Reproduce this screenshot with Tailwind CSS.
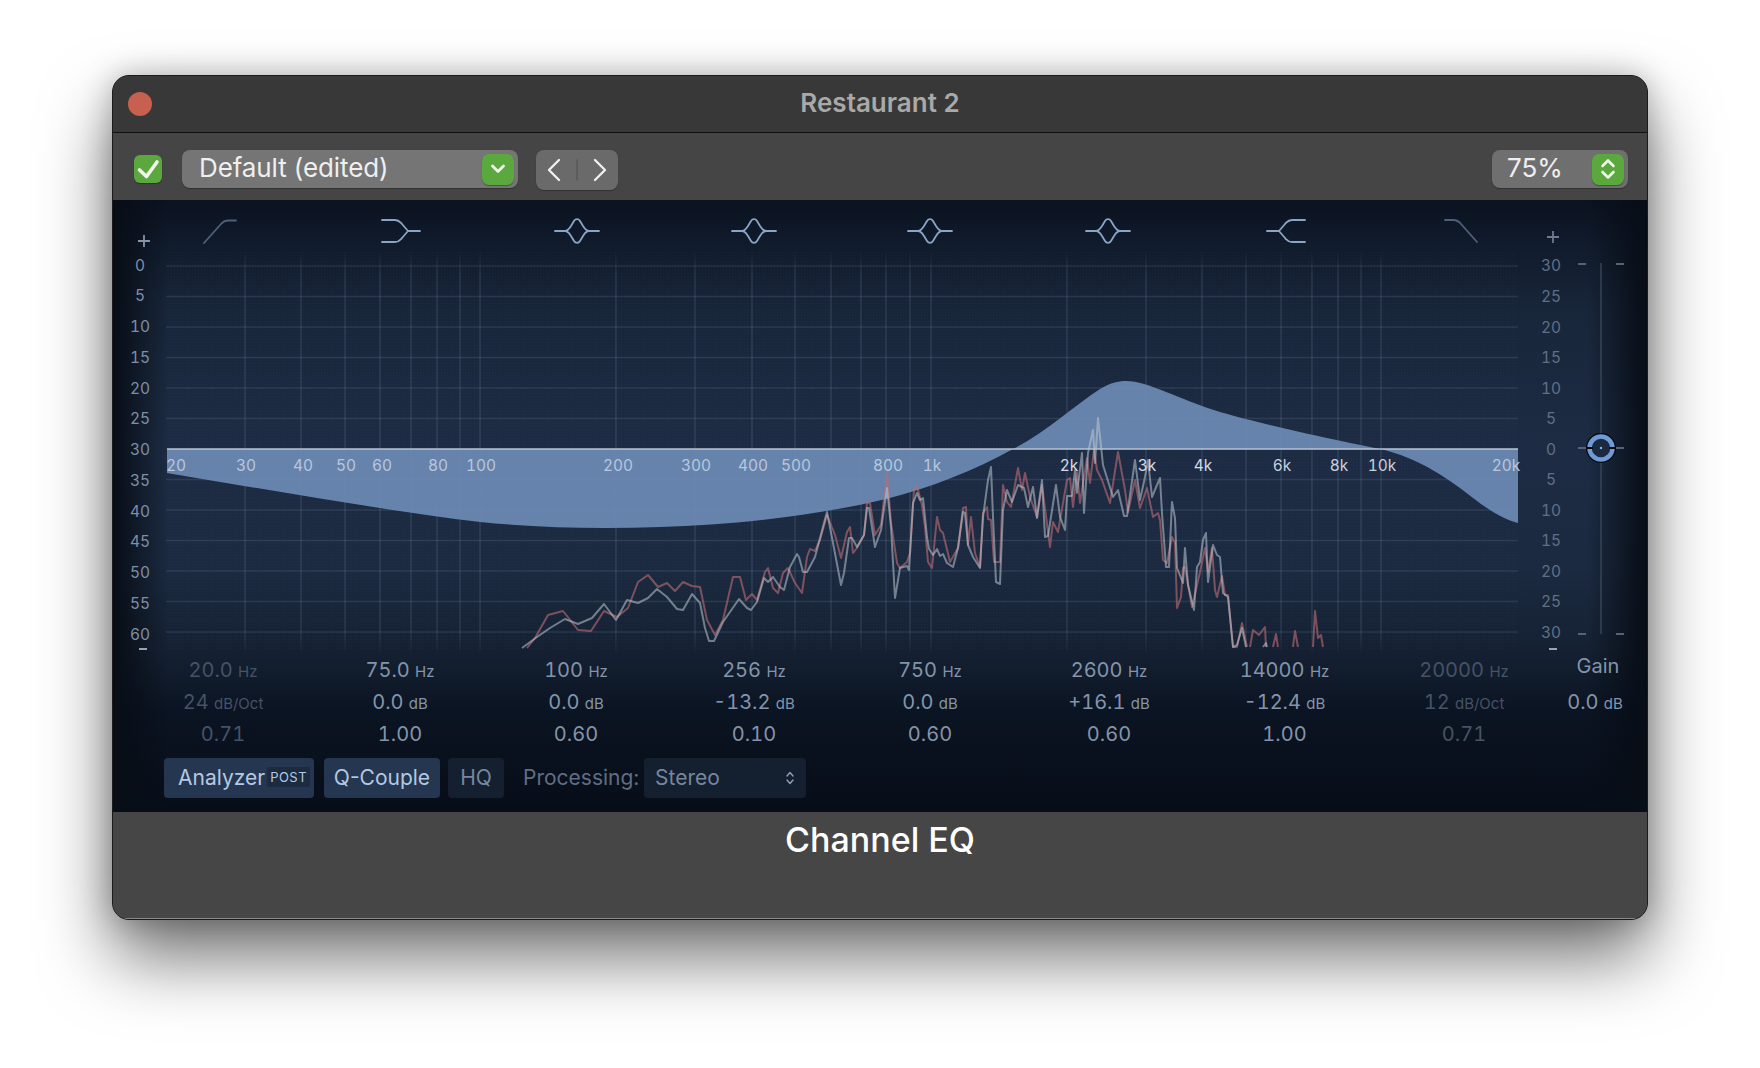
<!DOCTYPE html>
<html lang="en">

<head>
    <meta charset="UTF-8">
    <meta name="viewport" content="width=device-width, initial-scale=1.0">
    <title>Channel EQ</title>
    <script src="https://cdn.jsdelivr.net/npm/@tailwindcss/browser@4"></script>
</head>

<body class="bg-white antialiased font-['Inter',sans-serif]">
    <div class="w-[1760px] h-[1068px] overflow-hidden pt-[75px] pl-[112px]">
        <!-- plugin window -->
        <div class="w-[1536px] h-[845px] rounded-[17px] border border-[#1b1b1b] overflow-hidden flex flex-col bg-[#464646] shadow-[0_38px_70px_rgba(0,0,0,0.55),0_0_30px_rgba(0,0,0,0.25)]">

            <!-- title bar -->
            <div class="h-[57px] shrink-0 flex items-center pl-[15px] bg-[#383838] border-b border-[#111111] relative">
                <div class="w-[24px] h-[24px] rounded-full bg-[#c8604f]"></div>
                <div class="absolute inset-x-0 top-[12px] text-center text-[26px] leading-[30px] font-semibold text-[#a9a9a9]">Restaurant 2</div>
            </div>

            <!-- toolbar -->
            <div class="h-[67px] shrink-0 flex items-start pt-[17px] bg-[#454545]">
                <div class="ml-[21px] mt-[5px] w-[28px] h-[28px] rounded-[6px] bg-[#5aa83e] shadow-[0_1px_1px_rgba(0,0,0,0.3)]">
                    <svg width="28" height="28" viewBox="0 0 28 28" fill="none" stroke="#f2f6ee" stroke-width="3.6" stroke-linecap="round" stroke-linejoin="round"><path d="M5.500 15 L12.500 21.500 L23 7"/></svg>
                </div>
                <div class="ml-[20px] w-[336px] h-[38px] rounded-[8px] bg-[#757575] flex items-center justify-between pl-[17px] pr-[4px] shadow-[0_1px_1px_rgba(0,0,0,0.3)]">
                    <span class="text-[26px] leading-[32px] -mt-[3px] tracking-[-0.1px] text-[#efefef]">Default (edited)</span>
                    <div class="w-[32px] h-[31px] rounded-[7px] bg-[#5aa83e] flex items-center justify-center shadow-[0_1px_1px_rgba(0,0,0,0.3)]">
                        <svg width="16" height="12" viewBox="0 0 16 12" fill="none" stroke="#f0f5ec" stroke-width="2.8" stroke-linecap="round" stroke-linejoin="round"><path d="M2.500 3 L8 8.500 L13.500 3"/></svg>
                    </div>
                </div>
                <div class="ml-[18px] w-[82px] h-[40px] rounded-[8px] bg-[#6a6a6a] flex items-center justify-center shadow-[0_1px_1px_rgba(0,0,0,0.3)]">
                    <svg width="82" height="40" viewBox="0 0 82 40" fill="none" stroke="#eeeeee" stroke-width="2.4" stroke-linecap="round" stroke-linejoin="round">
                        <path d="M23 10 L13 20 L23 30"/>
                        <path d="M59 10 L69 20 L59 30"/>
                        <path d="M41 10 V30" stroke="#5a5a5a" stroke-width="1.6"/>
                    </svg>
                </div>
                <div class="ml-auto mr-[19px] w-[136px] h-[38px] rounded-[8px] bg-[#6f6f6f] flex items-center justify-between pl-[15px] pr-[4px] shadow-[0_1px_1px_rgba(0,0,0,0.3)]">
                    <span class="text-[26px] leading-[32px] -mt-[3px] text-[#efefef]">75%</span>
                    <div class="w-[32px] h-[31px] rounded-[7px] bg-[#5aa83e] flex items-center justify-center shadow-[0_1px_1px_rgba(0,0,0,0.3)]">
                        <svg width="18" height="24" viewBox="0 0 18 24" fill="none" stroke="#f0f5ec" stroke-width="2.6" stroke-linecap="round" stroke-linejoin="round"><path d="M3.500 9 L9 3.500 L14.500 9"/><path d="M3.500 15 L9 20.500 L14.500 15"/></svg>
                    </div>
                </div>
            </div>

            <!-- eq panel -->
            <div class="h-[612px] shrink-0 bg-[linear-gradient(90deg,#080d16,transparent_55px,transparent_calc(100%_-_60px),#080d16),linear-gradient(180deg,#0b1220_0px,#111c2d_50px,#18263a_110px,#1d2c44_250px,#1b2a40_370px,#152133_450px,#0b1422_510px,#070d18_612px)]">
                <svg width="1534" height="454" viewBox="113 200 1534 454" class="block">
                    <defs>
                        <linearGradient id="gridFade" gradientUnits="userSpaceOnUse" x1="0" y1="250" x2="0" y2="655">
                            <stop offset="0" stop-color="#8ba6cc" stop-opacity="0"/>
                            <stop offset="0.06" stop-color="#8ba6cc" stop-opacity="0.15"/>
                            <stop offset="0.94" stop-color="#8ba6cc" stop-opacity="0.15"/>
                            <stop offset="1" stop-color="#8ba6cc" stop-opacity="0"/>
                        </linearGradient>
                        <pattern id="dither" width="3" height="3" patternUnits="userSpaceOnUse">
                            <rect width="1" height="1" fill="#ffffff" fill-opacity="0.025"/>
                        </pattern>
                        <g id="bell" fill="none" stroke-linecap="round" stroke-linejoin="round">
                            <path d="M-22 0 H-12 C-9 0 -8 -2 -6 -5 L-3 -10 C-1.500 -12.500 1.500 -12.500 3 -10 L6 -5 C8 -2 9 0 12 0 H22"/>
                            <path d="M-12 0 C-9 0 -8 2 -6 5 L-3 10 C-1.500 12.500 1.500 12.500 3 10 L6 5 C8 2 9 0 12 0"/>
                        </g>
                    </defs>

                    <rect x="166" y="250" width="1352" height="400" fill="url(#dither)"/>

                    <!-- band type icons -->
                    <g fill="none" stroke-width="1.800" stroke-linecap="round" stroke-linejoin="round">
                        <path d="M204 243 L221 224 Q224 220.500 228 220.500 H236" stroke="#4e617c"/>
                        <path d="M382 220 H395 C399 220 400 222 402 224 L408 231 L402 238 C400 240 399 242 395 242 H382 M408 231 H420" stroke="#8aa4c6"/>
                        <path d="M1305 220 H1292 C1288 220 1287 222 1285 224 L1279 231 L1285 238 C1287 240 1288 242 1292 242 H1305 M1279 231 H1267" stroke="#8aa4c6"/>
                        <path d="M1445 220 H1453 Q1458 220 1461 224 L1477 242" stroke="#4e617c"/>
                    </g>
                    <g stroke="#8aa4c6" stroke-width="1.800">
                        <use href="#bell" x="577" y="231"/>
                        <use href="#bell" x="754" y="231"/>
                        <use href="#bell" x="930" y="231"/>
                        <use href="#bell" x="1108" y="231"/>
                    </g>

                    <!-- grid -->
                    <path fill="none" stroke="url(#gridFade)" stroke-width="1.600" d="M245 250V655M301 250V655M345 250V655M380 250V655M411 250V655M437 250V655M460 250V655M480 250V655M616 250V655M695 250V655M752 250V655M795 250V655M831 250V655M861 250V655M886 250V655M910 250V655M931 250V655M1067 250V655M1146 250V655M1202 250V655M1246 250V655M1281 250V655M1312 250V655M1338 250V655M1361 250V655M1381 250V655"/>
                    <path fill="none" stroke="#8ba6cc" stroke-opacity="0.15" stroke-width="1.600" d="M166 266H1518M166 296.500H1518M166 327H1518M166 357.500H1518M166 388H1518M166 418.500H1518M166 479.500H1518M166 510H1518M166 540.500H1518M166 571H1518M166 601.500H1518M166 632H1518"/>

                    <!-- eq curve -->
                    <path fill="#6f8db8" fill-opacity="0.9" d="M167 449 L167 473 C270 490 380 510 480 522 C540 528 600 529 660 527 C730 525 810 517 886 499 C930 488 975 470 1013 449 C1045 433 1075 405 1100 389 C1110 383 1118 381 1126 381 C1148 381 1178 399 1220 412 C1265 425 1340 441 1380 449 C1420 458 1450 480 1473 498 C1490 511 1505 520 1518 523 L1518 449 Z"/>

                    <!-- analyzer traces -->
                    <g fill="none" stroke-width="2" stroke-linejoin="round">
                        <path stroke="#bb6a72" stroke-opacity="0.62" d="M527 648L535 638L548 615L563 611L578 630L591 631L604 611L617 617L628 608L638 582L648 575L658 587L667 583L675 591L683 582L692 586L700 587L707 620L715 635L723 620L733 577L740 577L746 600L752 594L757 600L765 572L768 568L773 588L778 593L783 573L788 568L795 583L802 593L807 557L810 549L815 551L820 540L827 515L835 535L841 558L847 532L850 527L853 553L857 548L864 535L867 503L870 503L875 535L881 525L887 473L891 523L897 563L900 568L907 562L910 553L914 490L917 486L922 505L925 527L928 562L932 568L937 517L940 530L943 533L950 562L958 548L963 508L966 507L968 545L971 517L975 553L980 567L983 513L987 507L988 519L991 520L994 562L1000 562L1003 485L1007 502L1011 507L1018 468L1022 490L1025 473L1030 497L1037 517L1042 485L1050 547L1053 522L1058 532L1067 480L1070 478L1073 507L1077 472L1080 503L1087 458L1090 483L1094 450L1097 470L1102 480L1110 503L1118 452L1125 490L1128 512L1135 480L1140 508L1147 488L1153 517L1158 513L1160 520L1163 560L1167 563L1172 537L1175 543L1177 608L1181 597L1183 568L1185 567L1192 607L1200 572L1205 548L1208 572L1212 548L1215 590L1217 597L1222 576L1225 595L1228 595L1233 647L1237 647L1242 623L1247 647M1250 647L1253 630L1259 635L1265 627L1266 647M1273 647L1276 634L1278 647M1293 647L1295 631L1298 647M1313 647L1315 611L1318 638L1321 635L1323 647"/>
                        <path stroke="#c0c8d2" stroke-opacity="0.55" d="M522 648L537 637L550 628L565 619L578 624L592 618L604 604L616 620L627 600L638 603L648 598L657 589L667 597L677 609L683 610L692 594L700 603L705 628L709 641L714 641L723 622L739 599L747 608L751 610L757 602L764 578L768 582L773 577L780 587L784 590L790 567L797 554L799 557L803 572L807 572L815 557L820 538L827 512L833 543L841 585L844 573L849 538L852 538L857 547L864 535L867 508L869 508L875 547L881 530L887 488L891 527L895 598L900 568L907 566L909 570L913 503L917 493L920 500L923 498L927 537L929 549L933 555L937 549L940 556L943 554L947 563L953 567L958 548L963 512L965 513L968 545L973 557L980 568L983 517L988 480L991 467L993 517L996 582L1000 584L1003 510L1007 490L1012 502L1018 485L1024 488L1028 507L1033 487L1037 518L1042 480L1045 537L1048 536L1056 485L1060 517L1065 530L1067 496L1072 496L1075 470L1077 493L1082 453L1084 513L1088 453L1093 430L1095 463L1098 418L1103 465L1113 497L1118 490L1124 516L1127 516L1135 460L1140 500L1145 477L1148 460L1152 497L1157 485L1160 478L1162 513L1166 567L1169 567L1172 502L1175 518L1177 568L1183 583L1185 548L1188 585L1194 610L1197 567L1200 562L1203 540L1206 533L1208 582L1213 545L1217 555L1220 557L1223 593L1228 597L1233 647L1237 645L1242 628L1246 647M1263 647L1266 643L1267 647"/>
                    </g>

                    <path d="M167 449 H1518" stroke="#b9c4d4" stroke-width="1.600"/>

                    <!-- frequency labels -->
                    <g class="text-[15.5px] tabular-nums" fill="#b9c7dc" text-anchor="middle">
                        <text x="176" y="471">20</text>
                        <text x="246" y="471">30</text>
                        <text x="303" y="471">40</text>
                        <text x="346" y="471">50</text>
                        <text x="382" y="471">60</text>
                        <text x="438" y="471">80</text>
                        <text x="481" y="471">100</text>
                        <text x="618" y="471">200</text>
                        <text x="696" y="471">300</text>
                        <text x="753" y="471">400</text>
                        <text x="796" y="471">500</text>
                        <text x="888" y="471">800</text>
                        <text x="932" y="471">1k</text>
                        <text x="1069" y="471" fill="#d4dbe6">2k</text>
                        <text x="1147" y="471" fill="#d4dbe6">3k</text>
                        <text x="1203" y="471" fill="#d4dbe6">4k</text>
                        <text x="1282" y="471" fill="#c8d0dc">6k</text>
                        <text x="1339" y="471" fill="#c8d0dc">8k</text>
                        <text x="1382" y="471" fill="#c8d0dc">10k</text>
                        <text x="1506" y="471">20k</text>
                    </g>

                    <!-- left scale -->
                    <g class="text-[15.5px] tabular-nums" fill="#7f8fa7" text-anchor="middle">
                        <text x="140" y="271">0</text>
                        <text x="140" y="301">5</text>
                        <text x="140" y="332">10</text>
                        <text x="140" y="363">15</text>
                        <text x="140" y="394">20</text>
                        <text x="140" y="424">25</text>
                        <text x="140" y="455">30</text>
                        <text x="140" y="486">35</text>
                        <text x="140" y="517">40</text>
                        <text x="140" y="547">45</text>
                        <text x="140" y="578">50</text>
                        <text x="140" y="609">55</text>
                        <text x="140" y="640">60</text>
                    </g>
                    <path d="M138 241 H150 M144 235 V247" stroke="#8394ab" stroke-width="1.800"/>
                    <path d="M139 649 H147" stroke="#a9b4c4" stroke-width="1.800"/>

                    <!-- right scale -->
                    <g class="text-[15.5px] tabular-nums" fill="#616f85" text-anchor="middle">
                        <text x="1551" y="271">30</text>
                        <text x="1551" y="302">25</text>
                        <text x="1551" y="333">20</text>
                        <text x="1551" y="363">15</text>
                        <text x="1551" y="394">10</text>
                        <text x="1551" y="424">5</text>
                        <text x="1551" y="455">0</text>
                        <text x="1551" y="485">5</text>
                        <text x="1551" y="516">10</text>
                        <text x="1551" y="546">15</text>
                        <text x="1551" y="577">20</text>
                        <text x="1551" y="607">25</text>
                        <text x="1551" y="638">30</text>
                    </g>
                    <path d="M1547 237 H1559 M1553 231 V243" stroke="#6d7b92" stroke-width="1.800"/>
                    <path d="M1549 649 H1557" stroke="#a9b4c4" stroke-width="1.800"/>

                    <!-- gain slider -->
                    <path d="M1601 263 V634" stroke="#3a475a" stroke-width="1.400"/>
                    <path d="M1578 264 H1586 M1616 264 H1624 M1578 448 H1586 M1616 448 H1624 M1578 634 H1586 M1616 634 H1624" stroke="#55637a" stroke-width="1.800"/>
                    <circle cx="1601" cy="448" r="15" fill="#05080e"/>
                    <circle cx="1601" cy="448" r="11.500" fill="#1b2a41" stroke="#6f9ad6" stroke-width="4.500"/>
                    <path d="M1586 448 H1593 M1609 448 H1616" stroke="#05080e" stroke-width="1.800"/>
                    <circle cx="1601" cy="448" r="1.200" fill="#8fb2e6"/>
                </svg>

                <!-- band values -->
                <div class="pl-[21px] grid grid-cols-[178px_176px_176px_180px_172px_186px_165px_194px_74px] auto-rows-[32px] text-center text-[20px] leading-[32px] tabular-nums text-[#8494aa] [&_small]:text-[15px] [&_small]:leading-none">
                    <div class="text-[#465266]">20.0 <small>Hz</small></div>
                    <div>75.0 <small>Hz</small></div>
                    <div>100 <small>Hz</small></div>
                    <div>256 <small>Hz</small></div>
                    <div>750 <small>Hz</small></div>
                    <div>2600 <small>Hz</small></div>
                    <div>14000 <small>Hz</small></div>
                    <div class="text-[#465266]">20000 <small>Hz</small></div>
                    <div class="-mt-[4px]">Gain</div>

                    <div class="text-[#465266]">24 <small>dB/Oct</small></div>
                    <div>0.0 <small>dB</small></div>
                    <div>0.0 <small>dB</small></div>
                    <div>-13.2 <small>dB</small></div>
                    <div>0.0 <small>dB</small></div>
                    <div>+16.1 <small>dB</small></div>
                    <div>-12.4 <small>dB</small></div>
                    <div class="text-[#465266]">12 <small>dB/Oct</small></div>
                    <div class="-ml-[6px]">0.0 <small>dB</small></div>

                    <div class="text-[#465266]">0.71</div>
                    <div>1.00</div>
                    <div>0.60</div>
                    <div>0.10</div>
                    <div>0.60</div>
                    <div>0.60</div>
                    <div>1.00</div>
                    <div class="text-[#465266]">0.71</div>
                    <div></div>
                </div>

                <!-- analyzer buttons -->
                <div class="mt-[8px] pl-[51px] flex items-stretch h-[40px] text-[21px] leading-[40px]">
                    <div class="w-[150px] rounded-[4px] bg-[#243650] flex items-center pl-[14px] text-[#b4c8e2]">
                        <span>Analyzer</span>
                        <span class="ml-[2px] -mt-[2px] px-[3px] h-[20px] rounded-[2px] bg-[#1c2b40] text-[13px] leading-[20px] tracking-[0.5px] text-[#b4c8e2]">POST</span>
                    </div>
                    <div class="ml-[10px] w-[116px] rounded-[4px] bg-[#243650] text-center text-[#b4c8e2]">Q-Couple</div>
                    <div class="ml-[8px] w-[56px] rounded-[4px] bg-[#141f30] text-center text-[#75879f]">HQ</div>
                    <div class="ml-[19px] w-[121px] text-[#5f6e84]">Processing:</div>
                    <div class="w-[162px] rounded-[4px] bg-[#141f30] flex items-center justify-between pl-[11px] pr-[11px] text-[#75879f]">
                        <span>Stereo</span>
                        <svg width="10" height="18" viewBox="0 0 10 18" fill="none" stroke="#8fa0b6" stroke-width="1.400" stroke-linecap="round" stroke-linejoin="round"><path d="M2 7 L5 3.500 L8 7"/><path d="M2 11 L5 14.500 L8 11"/></svg>
                    </div>
                </div>
            </div>

            <!-- footer -->
            <div class="flex-1 bg-[#464646] border-b border-[#8a8a8a] text-center text-[34px] leading-[48px] pt-[4px] font-medium text-white">Channel EQ</div>
        </div>
    </div>
</body>

</html>
